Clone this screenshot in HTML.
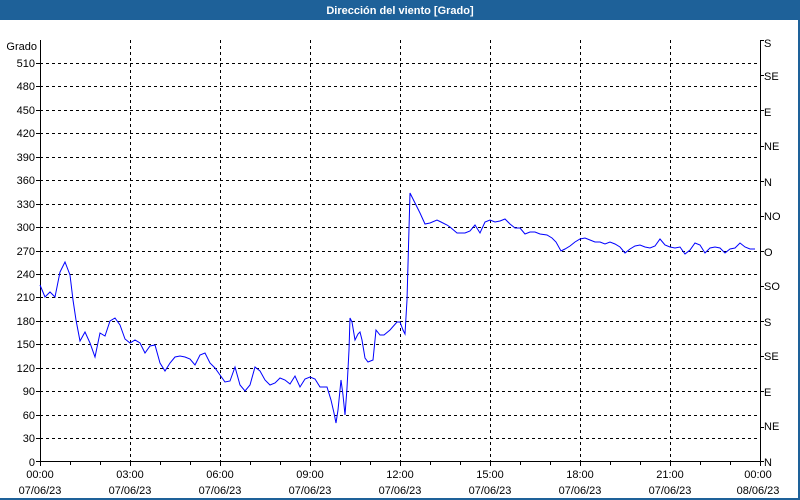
<!DOCTYPE html>
<html><head><meta charset="utf-8"><style>
html,body{margin:0;padding:0;background:#fff;width:800px;height:500px;overflow:hidden}
svg{display:block}
text{font-family:"Liberation Sans","DejaVu Sans",sans-serif;font-size:11px;fill:#000}
</style></head><body>
<svg width="800" height="500" viewBox="0 0 800 500" xmlns="http://www.w3.org/2000/svg">
<rect x="0" y="0" width="800" height="500" fill="#fff"/>
<rect x="0" y="0" width="800" height="20" fill="#1e6199"/>
<rect x="798" y="0" width="2" height="500" fill="#1e6199"/>
<rect x="0" y="498" width="800" height="2" fill="#1e6199"/>
<text x="400" y="14" text-anchor="middle" style="font-weight:bold;fill:#fff">Dirección del viento [Grado]</text>
<g stroke="#000" stroke-width="1" stroke-dasharray="3,3" shape-rendering="crispEdges">
<line x1="40" x2="760" y1="63.5" y2="63.5"/><line x1="40" x2="760" y1="86.5" y2="86.5"/><line x1="40" x2="760" y1="110.5" y2="110.5"/><line x1="40" x2="760" y1="133.5" y2="133.5"/><line x1="40" x2="760" y1="157.5" y2="157.5"/><line x1="40" x2="760" y1="180.5" y2="180.5"/><line x1="40" x2="760" y1="204.5" y2="204.5"/><line x1="40" x2="760" y1="227.5" y2="227.5"/><line x1="40" x2="760" y1="251.5" y2="251.5"/><line x1="40" x2="760" y1="274.5" y2="274.5"/><line x1="40" x2="760" y1="297.5" y2="297.5"/><line x1="40" x2="760" y1="321.5" y2="321.5"/><line x1="40" x2="760" y1="344.5" y2="344.5"/><line x1="40" x2="760" y1="368.5" y2="368.5"/><line x1="40" x2="760" y1="391.5" y2="391.5"/><line x1="40" x2="760" y1="415.5" y2="415.5"/><line x1="40" x2="760" y1="438.5" y2="438.5"/>
<line x1="130.5" x2="130.5" y1="40" y2="462"/><line x1="220.5" x2="220.5" y1="40" y2="462"/><line x1="310.5" x2="310.5" y1="40" y2="462"/><line x1="400.5" x2="400.5" y1="40" y2="462"/><line x1="490.5" x2="490.5" y1="40" y2="462"/><line x1="580.5" x2="580.5" y1="40" y2="462"/><line x1="670.5" x2="670.5" y1="40" y2="462"/>
</g>
<g stroke="#000" stroke-width="1" shape-rendering="crispEdges">
<line x1="40.5" x2="40.5" y1="40" y2="462"/><line x1="760.5" x2="760.5" y1="40" y2="462"/><line x1="40" x2="761" y1="461.5" y2="461.5"/>
<path d="M36 63.5h4M36 86.5h4M36 110.5h4M36 133.5h4M36 157.5h4M36 180.5h4M36 204.5h4M36 227.5h4M36 251.5h4M36 274.5h4M36 297.5h4M36 321.5h4M36 344.5h4M36 368.5h4M36 391.5h4M36 415.5h4M36 438.5h4M36 461.5h4"/>
<path d="M760 40.5h4M760 75.5h4M760 110.5h4M760 146.5h4M760 181.5h4M760 216.5h4M760 251.5h4M760 286.5h4M760 321.5h4M760 356.5h4M760 391.5h4M760 427.5h4M760 461.5h4"/>
<path d="M40.5 462v4M70.5 462v3M100.5 462v3M130.5 462v4M160.5 462v3M190.5 462v3M220.5 462v4M250.5 462v3M280.5 462v3M310.5 462v4M340.5 462v3M370.5 462v3M400.5 462v4M430.5 462v3M460.5 462v3M490.5 462v4M520.5 462v3M550.5 462v3M580.5 462v4M610.5 462v3M640.5 462v3M670.5 462v4M700.5 462v3M730.5 462v3M760.5 462v4"/>
</g>
<g text-anchor="end">
<text x="37" y="50">Grado</text>
<text x="35" y="67">510</text><text x="35" y="90">480</text><text x="35" y="114">450</text><text x="35" y="137">420</text><text x="35" y="161">390</text><text x="35" y="184">360</text><text x="35" y="208">330</text><text x="35" y="231">300</text><text x="35" y="255">270</text><text x="35" y="278">240</text><text x="35" y="301">210</text><text x="35" y="325">180</text><text x="35" y="348">150</text><text x="35" y="372">120</text><text x="35" y="395">90</text><text x="35" y="419">60</text><text x="35" y="442">30</text><text x="35" y="466">0</text>
</g>
<g>
<text x="764" y="47">S</text><text x="764" y="80">SE</text><text x="764" y="116">E</text><text x="764" y="150">NE</text><text x="764" y="186">N</text><text x="764" y="220">NO</text><text x="764" y="256">O</text><text x="764" y="290">SO</text><text x="764" y="326">S</text><text x="764" y="360">SE</text><text x="764" y="396">E</text><text x="764" y="430">NE</text><text x="764" y="466">N</text>
</g>
<g text-anchor="middle">
<text x="40" y="478">00:00</text><text x="40" y="494">07/06/23</text>
<text x="130" y="478">03:00</text><text x="130" y="494">07/06/23</text>
<text x="220" y="478">06:00</text><text x="220" y="494">07/06/23</text>
<text x="310" y="478">09:00</text><text x="310" y="494">07/06/23</text>
<text x="400" y="478">12:00</text><text x="400" y="494">07/06/23</text>
<text x="490" y="478">15:00</text><text x="490" y="494">07/06/23</text>
<text x="580" y="478">18:00</text><text x="580" y="494">07/06/23</text>
<text x="670" y="478">21:00</text><text x="670" y="494">07/06/23</text>
<text x="758" y="478">00:00</text><text x="758" y="494">08/06/23</text>
</g>
<polyline fill="none" stroke="#0000ff" stroke-width="1" points="40,285 45,297 50,292 55,297 60,272 65,262 70,275 73,300 76,320 80,341 85,332 90,343 95,357 100,333 105,336 110,321 115,318 120,325 125,339 130,343 135,340 140,343 145,353 150,346 155,345 160,363 165,371 170,363 175,357 180,356 185,357 190,359 195,365 200,355 205,353 210,363 215,368 220,375 225,382 230,381 235,367 240,385 245,391 250,385 255,367 260,371 265,380 270,385 275,383 280,378 285,380 290,384 295,376 300,387 305,379 310,377 315,379 320,387 327,387 331,400 334,413 336,423 338,410 341,380 343,395 345,415 347,388 349,350 350,318 352,322 355,340 358,334 360,332 362,340 365,358 368,362 373,360 376,330 380,335 384,335 390,330 397,322 400,322 403,330 405,334 407,300 410,193 415,203 420,213 425,224 430,223 437,220 441,222 447,225 450,227 457,233 465,233 470,231 475,225 480,233 485,222 490,220 495,222 500,221 505,219 510,224 515,228 520,228 525,234 530,232 535,232 540,234 547,235 552,238 556,242 561,251 565,249 570,246 575,242 580,239 585,238 590,240 595,242 600,242 605,244 610,242 615,244 620,247 625,253 630,249 635,246 640,245 645,247 650,248 655,246 660,239 665,245 670,247 675,248 680,247 685,254 690,250 695,243 700,245 705,253 710,248 715,247 720,248 725,253 730,249 735,248 740,243 745,247 750,249 755,249"/>
</svg>
</body></html>
